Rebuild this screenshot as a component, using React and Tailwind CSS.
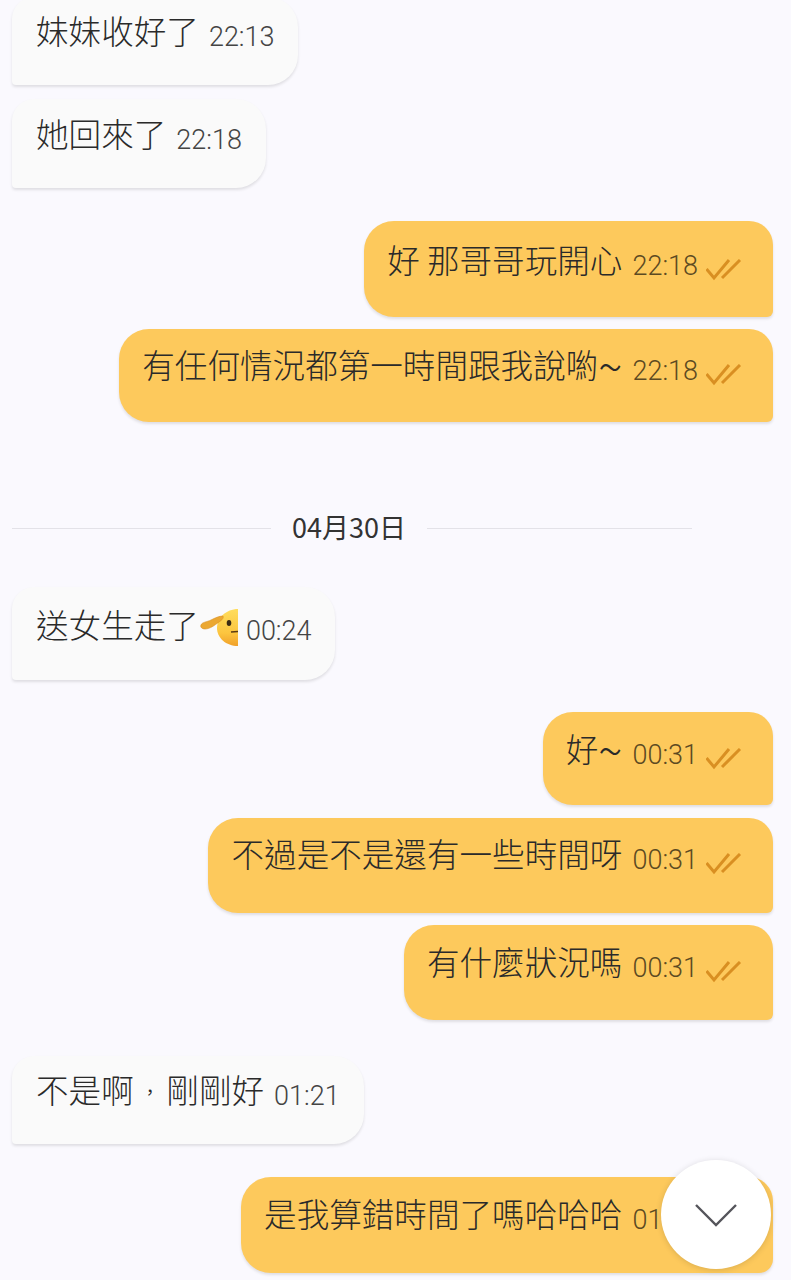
const CJK = "font-['Noto_Sans_CJK_TC','Noto_Sans_CJK_SC',sans-serif]";

const messages = [
  { mine: false, text: "妹妹收好了", time: "22:13", box: "-mt-[3px] h-[88px] pt-[13px]" },
  { mine: false, text: "她回來了", time: "22:18", box: "mt-[14px] h-[89px] pt-[14px]" },
  { mine: true, text: "好 那哥哥玩開心", time: "22:18", box: "mt-[33px] h-[96px] pt-[18px]" },
  { mine: true, text: "有任何情況都第一時間跟我說喲", tilde: true, time: "22:18", box: "mt-[12px] h-[93px] pt-[15px]" },
  { date: "04月30日" },
  { mine: false, text: "送女生走了", emoji: true, time: "00:24", box: "mt-[39px] h-[93px] pt-[17px]" },
  { mine: true, text: "好", tilde: true, time: "00:31", box: "mt-[32px] h-[93px] pt-[16px]" },
  { mine: true, text: "不過是不是還有一些時間呀", time: "00:31", box: "mt-[13px] h-[95px] pt-[15px]" },
  { mine: true, text: "有什麼狀況嗎", time: "00:31", box: "mt-[12px] h-[95px] pt-[16px]" },
  { mine: false, text: "不是啊", comma: "剛剛好", time: "01:21", box: "mt-[36px] h-[88px] pt-[13px]" },
  { mine: true, text: "是我算錯時間了嗎哈哈哈", time: "01:32", box: "mt-[33px] h-[96px] pt-[16px]", last: true },
];

function DoubleCheck() {
  return (
    <svg width="36" height="24" viewBox="0 0 36 24" fill="none" className="ml-2 self-start mt-5 shrink-0">
      <path d="M0.5 10L8 19L23 1" stroke="#d98f22" strokeWidth="3" />
      <path d="M16 19L34 1" stroke="#d98f22" strokeWidth="3" />
    </svg>
  );
}

// half visible saluting face, the right side is cut off in the screenshot
function SaluteEmoji() {
  return (
    <svg width="38" height="38" viewBox="0 0 38 38" className="ml-px mr-2 self-start mt-1 shrink-0">
      <defs>
        <linearGradient id="face" x1="0" y1="0" x2="0" y2="1">
          <stop offset="0" stopColor="#ffdd5c" />
          <stop offset="0.65" stopColor="#fcc53f" />
          <stop offset="1" stopColor="#f0a02a" />
        </linearGradient>
      </defs>
      <path d="M38 1C26 1 17 10 17 20C17 30 26 38 38 38Z" fill="url(#face)" />
      <path d="M1 17C2 14 7 14 11 12C15 10 19 8 23 8C24 10 22 12 19 14C15 17 10 21 5 21C2 21 0 19 1 17Z" fill="#eba730" stroke="#d98f22" strokeWidth="0.6" />
      <ellipse cx="29" cy="15" rx="2.3" ry="3" fill="#3b2a14" />
      <path d="M31 24L38 23.5" stroke="#5b3a12" strokeWidth="1.6" />
    </svg>
  );
}

function Bubble({ msg }) {
  const side = msg.mine
    ? "self-end mr-[18px] bg-[#fdc95c] pl-[23px] pr-[31px] rounded-tl-[30px] rounded-tr-[24px] rounded-bl-[30px]"
    : "self-start ml-3 bg-[#fafafa] pl-6 pr-6 rounded-tl-[22px] rounded-tr-[30px] rounded-br-[30px] rounded-bl-[4px]";
  const corner = msg.mine ? (msg.last ? "rounded-br-[14px]" : "rounded-br-[6px]") : "";
  return (
    <div className={`flex items-baseline shadow-[0_2px_3px_rgba(0,0,0,0.11)] ${side} ${corner} ${msg.box}`}>
      <span className={`${CJK} text-[32.6px] leading-[40px] font-light text-[#2a2a2a] whitespace-nowrap`}>
        {msg.text}
        {msg.comma && <span className="inline-block w-[32.6px] text-center text-[18px] font-normal leading-[0] align-[4px]">，</span>}
        {msg.comma}
        {msg.tilde && <span className="text-[45px] leading-[0] align-[-6px]">~</span>}
      </span>
      {msg.emoji ? <SaluteEmoji /> : <span className="w-[10px]" />}
      <span className={`font-['Roboto',sans-serif] text-[27px] leading-[40px] font-light translate-y-0.5 ${msg.mine ? "text-[#5c4a22]" : "text-[#444444]"}`}>
        {msg.time}
      </span>
      {msg.mine && <DoubleCheck />}
    </div>
  );
}

function DateRow({ label }) {
  return (
    <div className="flex items-center h-10 mt-[86px] ml-3 mr-[99px]">
      <div className="w-[259px] h-px bg-[#e3e2e8]" />
      <span className={`${CJK} mx-[21px] pb-0.5 text-[27px] leading-10 text-[#333333] whitespace-nowrap`}>{label}</span>
      <div className="flex-1 h-px bg-[#e3e2e8]" />
    </div>
  );
}

export default function App() {
  return (
    <div className="relative flex flex-col h-[1280px] w-[791px] overflow-hidden bg-[#faf9fe]">
      {messages.map((msg, i) =>
        msg.date ? <DateRow key={i} label={msg.date} /> : <Bubble key={i} msg={msg} />
      )}
      <button className="absolute left-[661px] top-[1160px] flex items-center justify-center w-[110px] h-[109px] rounded-full bg-white shadow-[0_1px_6px_rgba(0,0,0,0.14)]">
        <svg width="42" height="24" viewBox="0 0 42 24" fill="none">
          <path d="M1 2L21 22L41 2" stroke="#55555b" strokeWidth="2.4" />
        </svg>
      </button>
    </div>
  );
}
